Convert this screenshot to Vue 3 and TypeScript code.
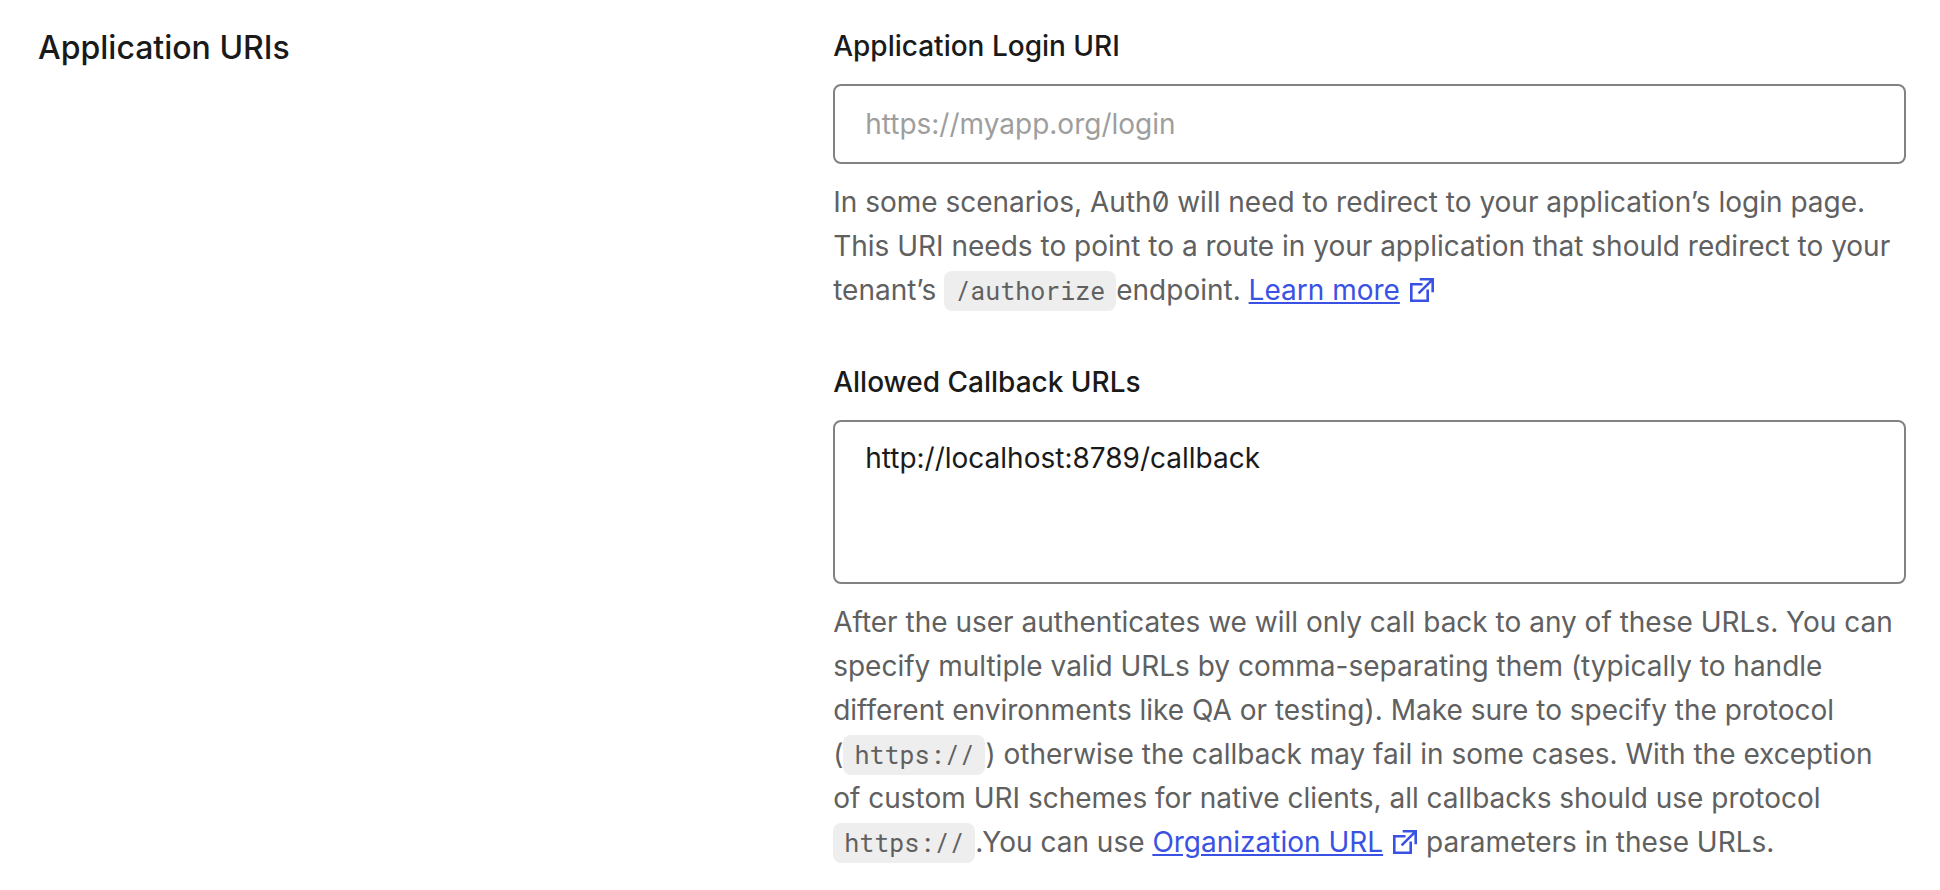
<script setup lang="ts">
import { ref } from 'vue'

const loginUri = ref<string>('')
const callbacks = ref<string>('http://localhost:8789/callback')
</script>

<template>
  <main class="settings">
    <h2 class="section-title">Application URIs</h2>
    <div class="fields">
      <div class="field">
        <label class="label" for="login-uri">Application Login URI</label>
        <input id="login-uri" v-model="loginUri" class="control" type="text" placeholder="https://myapp.org/login" />
        <p class="help">
          In some scenarios, Auth0 will need to redirect to your application’s login page. This URI needs to point to a route in your application that should redirect to your tenant’s <code class="code">/authorize</code>endpoint.
          <a class="link" href="#"><span class="link-text">Learn more</span><svg class="icon" viewBox="0 0 24 24" aria-hidden="true"><path d="M12.5 6.2H1.3V22.7H17.7V11.5M9.7 1.3H22.7V14.3M22.7 1.3L8.6 15.4" /></svg></a>
        </p>
      </div>
      <div class="field">
        <label class="label" for="callback-urls">Allowed Callback URLs</label>
        <textarea id="callback-urls" v-model="callbacks" class="control area" rows="3"></textarea>
        <p class="help">
          After the user authenticates we will only call back to any of these URLs. You can specify multiple valid URLs by comma-separating them (typically to handle different environments like QA or testing). Make sure to specify the protocol (<code class="code">https://</code>) otherwise the callback may fail in some cases. With the exception of custom URI schemes for native clients, all callbacks should use protocol <code class="code">https://</code>.You can use
          <a class="link" href="#"><span class="link-text">Organization URL</span><svg class="icon" viewBox="0 0 24 24" aria-hidden="true"><path d="M12.5 6.2H1.3V22.7H17.7V11.5M9.7 1.3H22.7V14.3M22.7 1.3L8.6 15.4" /></svg></a> parameters in these URLs.
        </p>
      </div>
    </div>
  </main>
</template>

<style>
body {
  margin: 0;
  background: #fff;
}
</style>

<style scoped>
.settings {
  display: grid;
  grid-template-columns: 2fr 3fr;
  column-gap: 80px;
  padding: 24px 34px 0 38px;
  font-family: Inter, "Liberation Sans", sans-serif;
  font-size: 28px;
  line-height: 44px;
  font-feature-settings: "zero";
  color: #1a1a1a;
}
.section-title {
  margin: 0;
  font-size: 32px;
  line-height: 48px;
  font-weight: 500;
}
.fields {
  display: flex;
  flex-direction: column;
  gap: 48px;
  min-width: 0;
}
.field {
  display: flex;
  flex-direction: column;
}
.label {
  margin-bottom: 16px;
  font-weight: 500;
}
.control {
  box-sizing: border-box;
  width: 100%;
  height: 80px;
  margin: 0;
  padding: 14px 30px;
  border: 2px solid #828282;
  border-radius: 8px;
  background: #fff;
  color: #1a1a1a;
  font: inherit;
}
.control::placeholder {
  color: #9e9e9e;
  opacity: 1;
}
.area {
  display: block;
  height: 164px;
  resize: none;
}
.help {
  margin: 16px 0 0;
  color: #606060;
}
.code {
  padding: 3px 11px 4px;
  border-radius: 8px;
  background: #eee;
  font-family: "Roboto Mono", "Liberation Mono", monospace;
  font-size: 25px;
  line-height: 24px;
}
.link {
  color: #3a52e4;
  text-decoration: none;
}
.link-text {
  text-decoration: underline;
}
.icon {
  width: 24px;
  height: 24px;
  margin: 0 1px 0 10px;
  vertical-align: -2px;
  fill: none;
  stroke: currentColor;
  stroke-width: 2.6;
}
</style>
